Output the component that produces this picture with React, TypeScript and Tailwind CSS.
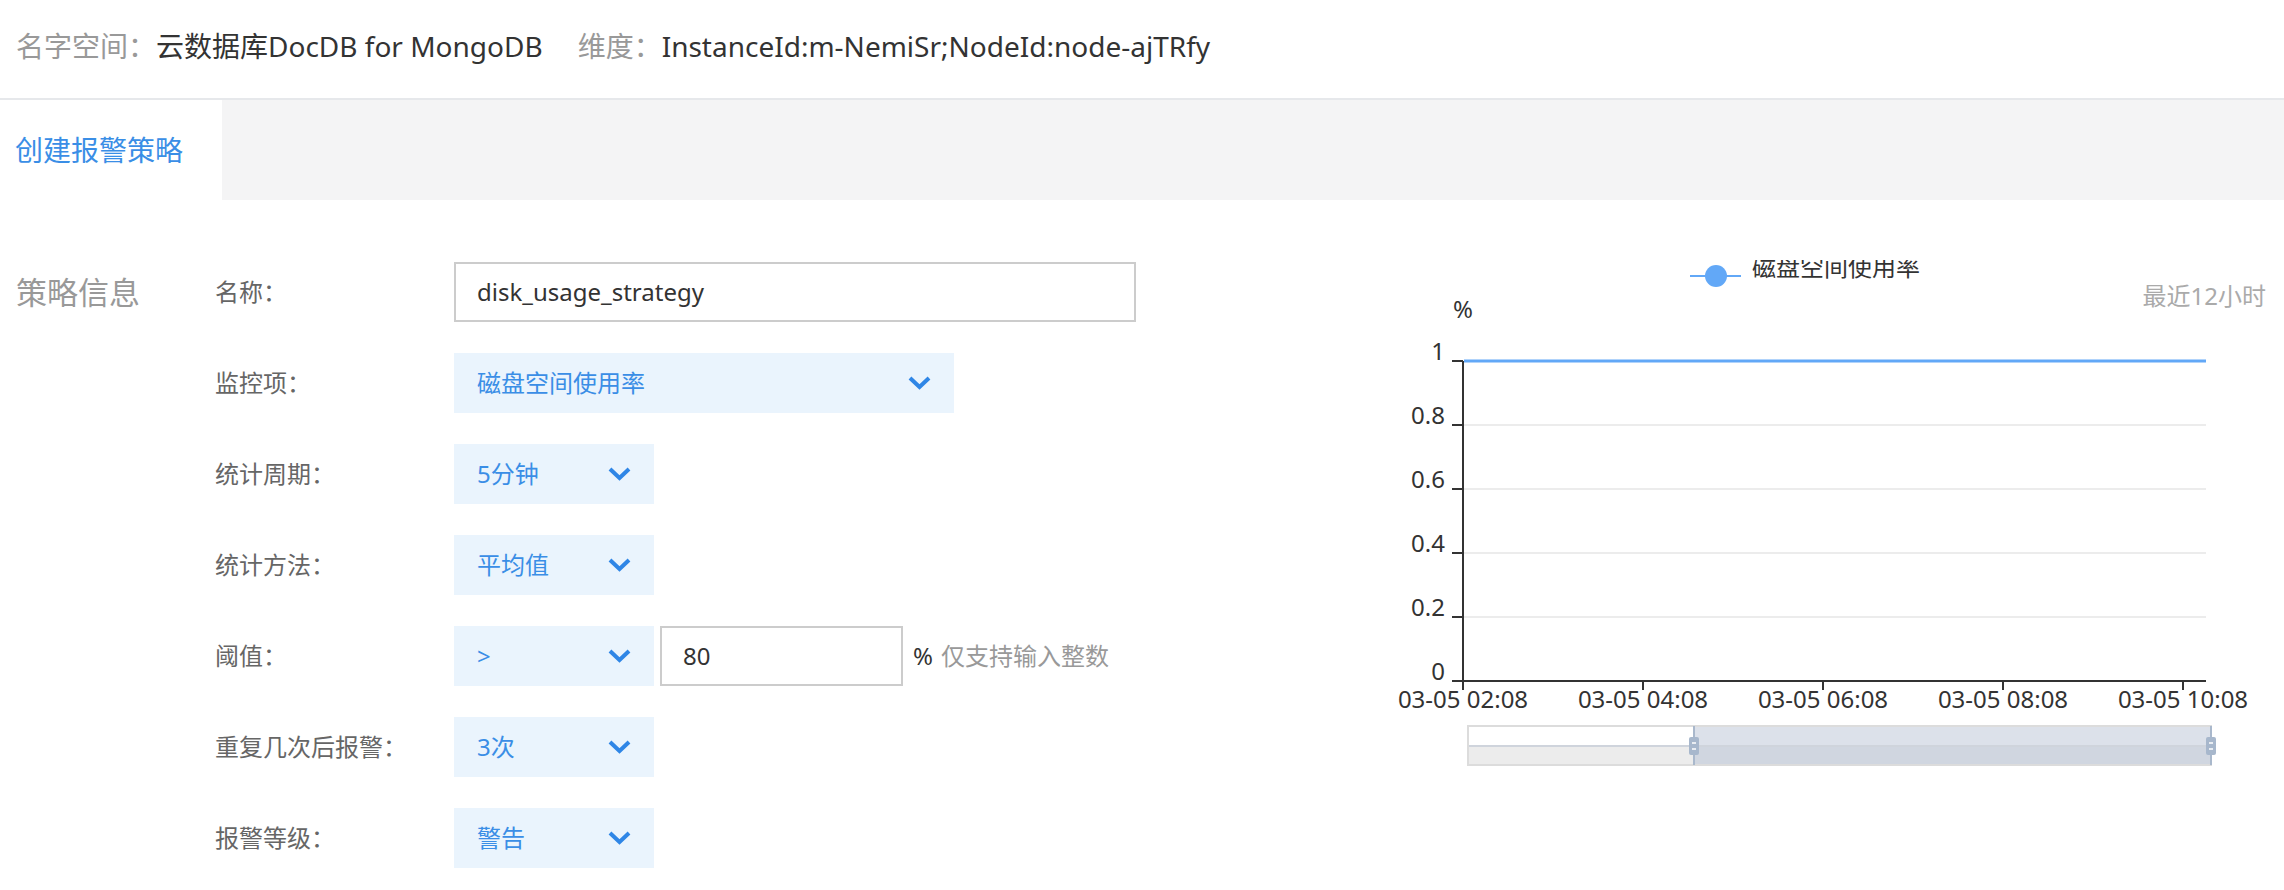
import React from "react";

const Chevron = () => (
  <svg width="23" height="14" viewBox="0 0 23 14" className="shrink-0">
    <polyline points="2,2 11.5,11 21,2" fill="none" stroke="#2f86e6" strokeWidth="4" />
  </svg>
);

const Select = ({ value, width }: { value: string; width: string }) => (
  <div className={`${width} h-[60px] bg-[#eaf4fd] flex items-center justify-between pl-[23px] pr-[23px] text-[24px] text-[#3a8ee6]`}>
    <span>{value}</span>
    <Chevron />
  </div>
);

const Row = ({ label, children }: { label: string; children: React.ReactNode }) => (
  <div className="flex items-center h-[60px]">
    <div className="w-[239px] shrink-0 text-[24px] text-[#666]">{label}</div>
    {children}
  </div>
);

const gridY = [101, 165, 229, 293, 357, 421];
const yLabels = ["1", "0.8", "0.6", "0.4", "0.2", "0"];
const ticksX = [83, 263, 443, 623, 803];
const xLabels = ["03-05 02:08", "03-05 04:08", "03-05 06:08", "03-05 08:08", "03-05 10:08"];

const Chart = () => (
  <svg width="904" height="528" viewBox="0 0 904 528" className="block" style={{ fontFamily: "'Noto Sans','Noto Sans CJK SC',sans-serif" }}>
    {/* legend */}
    <line x1="310" y1="16" x2="361" y2="16" stroke="#62a8f7" strokeWidth="2" />
    <circle cx="336" cy="16" r="11" fill="#62a8f7" />
    <text x="372" y="16" fontSize="24" fill="#333">磁盘空间使用率</text>
    <text x="73" y="58" fontSize="24" fill="#333">%</text>

    {/* grid */}
    {gridY.slice(1, 5).map((y) => (
      <line key={y} x1="84" y1={y} x2="826" y2={y} stroke="#ececec" strokeWidth="2" />
    ))}
    {gridY.map((y, i) => (
      <g key={"t" + y}>
        <line x1="72" y1={y} x2="83" y2={y} stroke="#333" strokeWidth="2" />
        <text x="65" y={y - 1} fontSize="24" fill="#333" textAnchor="end">{yLabels[i]}</text>
      </g>
    ))}
    <line x1="83" y1="101" x2="83" y2="422" stroke="#333" strokeWidth="2" />
    <line x1="82" y1="421" x2="826" y2="421" stroke="#333" strokeWidth="2" />
    {ticksX.map((x, i) => (
      <g key={"x" + x}>
        <line x1={x} y1="421" x2={x} y2="430" stroke="#333" strokeWidth="2" />
        <text x={x} y="448" fontSize="24" fill="#333" textAnchor="middle">{xLabels[i]}</text>
      </g>
    ))}
    {/* data */}
    <line x1="84" y1="101" x2="826" y2="101" stroke="#62a8f7" strokeWidth="3" />

    {/* data zoom */}
    <rect x="88" y="466" width="743" height="20" fill="#ffffff" />
    <rect x="88" y="486" width="743" height="19" fill="#ececec" />
    <rect x="314" y="466" width="517" height="20" fill="#dce1ea" />
    <rect x="314" y="486" width="517" height="19" fill="#d0d6e0" />
    <line x1="88" y1="486" x2="831" y2="486" stroke="#cfd4dc" strokeWidth="2" />
    <rect x="88" y="466" width="743" height="39" fill="none" stroke="#dcdcdc" strokeWidth="2" />
    <line x1="314" y1="466" x2="314" y2="505" stroke="#a9b8cc" strokeWidth="2" />
    <line x1="831" y1="466" x2="831" y2="505" stroke="#a9b8cc" strokeWidth="2" />
    {[314, 831].map((x) => (
      <g key={"h" + x}>
        <rect x={x - 5} y="477" width="10" height="18" rx="2" fill="#a7b7cc" />
        <line x1={x - 2} y1="483" x2={x + 2} y2="483" stroke="#fff" strokeWidth="1.5" />
        <line x1={x - 2} y1="489" x2={x + 2} y2="489" stroke="#fff" strokeWidth="1.5" />
      </g>
    ))}
  </svg>
);

export default function App() {
  return (
    <div className="w-[2284px] min-h-[890px] bg-white font-['Noto_Sans','Noto_Sans_CJK_SC',sans-serif]">
      <div className="h-[100px] border-b-2 border-[#e6e8eb] flex items-center pb-[6px] pl-[16px] text-[28px]">
        <span className="text-[#999]">名字空间：</span>
        <span className="text-[#333]">云数据库DocDB for MongoDB</span>
        <span className="text-[#999] ml-[35px]">维度：</span>
        <span className="text-[#333]">InstanceId:m-NemiSr;NodeId:node-ajTRfy</span>
      </div>
      <div className="h-[100px] bg-[#f4f4f5] flex">
        <div className="w-[222px] h-full bg-white flex items-center pl-[15px] text-[28px] text-[#3a8ee6]">创建报警策略</div>
      </div>
      <div className="flex">
        <div className="flex-1 flex pl-[16px] pt-[62px]">
          <div className="w-[199px] shrink-0 h-[60px] flex items-center text-[31px] text-[#999]">策略信息</div>
          <div className="flex flex-col gap-[31px]">
            <Row label="名称：">
              <div className="w-[682px] h-[60px] border-2 border-[#cccccc] flex items-center pl-[21px] text-[24px] text-[#333]">disk_usage_strategy</div>
            </Row>
            <Row label="监控项：">
              <Select value="磁盘空间使用率" width="w-[500px]" />
            </Row>
            <Row label="统计周期：">
              <Select value="5分钟" width="w-[200px]" />
            </Row>
            <Row label="统计方法：">
              <Select value="平均值" width="w-[200px]" />
            </Row>
            <Row label="阈值：">
              <Select value=">" width="w-[200px]" />
              <div className="w-[243px] h-[60px] ml-[6px] border-2 border-[#cccccc] flex items-center pl-[21px] text-[24px] text-[#333]">80</div>
              <span className="ml-[10px] text-[24px] text-[#333]">%</span>
              <span className="ml-[8px] text-[24px] text-[#999]">仅支持输入整数</span>
            </Row>
            <Row label="重复几次后报警：">
              <Select value="3次" width="w-[200px]" />
            </Row>
            <Row label="报警等级：">
              <Select value="警告" width="w-[200px]" />
            </Row>
          </div>
        </div>
        <div className="w-[904px] shrink-0 pt-[60px] relative">
          <Chart />
          <div className="absolute right-[18px] top-[82px] text-[24px] leading-[28px] text-[#aaa]">最近12小时</div>
        </div>
      </div>
    </div>
  );
}
